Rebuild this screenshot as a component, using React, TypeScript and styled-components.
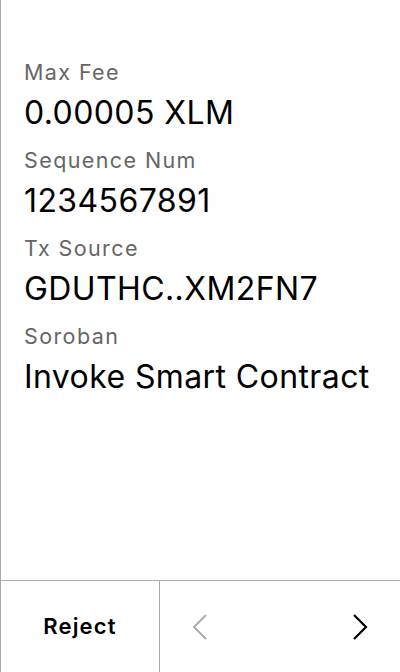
import React from "react";
import styled, { createGlobalStyle } from "styled-components";

const Global = createGlobalStyle`
  html, body { margin: 0; padding: 0; background: #fff; }
  body { font-family: Inter, "Noto Sans", sans-serif; }
  * { box-sizing: border-box; }
`;

const Screen = styled.div`
  width: 400px;
  height: 672px;
  display: flex;
  flex-direction: column;
  border-left: 1px solid #a8a8a8;
  background: #fff;
`;

const Content = styled.div`
  flex: 1;
  padding: 58px 0 0 23px;
  display: flex;
  flex-direction: column;
`;

const Label = styled.div`
  font-size: 21.5px;
  line-height: 28px;
  letter-spacing: 1.4px;
  color: #666;
  margin-bottom: 7px;
`;

const Value = styled.div`
  font-size: 32px;
  line-height: 40px;
  letter-spacing: 0.4px;
  color: #000;
  margin-bottom: 13px;
  white-space: nowrap;
`;

const Footer = styled.div`
  height: 92px;
  border-top: 1px solid #aaa;
  display: flex;
`;

const RejectButton = styled.div`
  width: 159px;
  border-right: 1px solid #aaa;
  display: flex;
  align-items: center;
  justify-content: center;
  font-size: 22px;
  font-weight: 600;
  letter-spacing: 1.2px;
  color: #000;
  padding-bottom: 2px;
`;

const Nav = styled.div`
  flex: 1;
  display: flex;
  align-items: center;
  justify-content: space-between;
  padding: 0 32px 0 32px;
`;

const Chevron = styled.svg<{ $muted?: boolean }>`
  width: 16px;
  height: 28px;
  color: ${(p) => (p.$muted ? "#a8a8a8" : "#000")};
`;

const rows = [
  ["Max Fee", "0.00005 XLM"],
  ["Sequence Num", "1234567891"],
  ["Tx Source", "GDUTHC..XM2FN7"],
  ["Soroban", "Invoke Smart Contract"],
];

export default function App() {
  return (
    <>
      <Global />
      <Screen>
        <Content>
          {rows.map(([l, v]) => (
            <React.Fragment key={l}>
              <Label>{l}</Label>
              <Value>{v}</Value>
            </React.Fragment>
          ))}
        </Content>
        <Footer>
          <RejectButton>Reject</RejectButton>
          <Nav>
            <Chevron $muted viewBox="0 0 16 28">
              <path d="M14 2 L2 14 L14 26" fill="none" stroke="currentColor" strokeWidth="1.8" />
            </Chevron>
            <Chevron viewBox="0 0 16 28">
              <path d="M2 2 L14 14 L2 26" fill="none" stroke="currentColor" strokeWidth="2.2" />
            </Chevron>
          </Nav>
        </Footer>
      </Screen>
    </>
  );
}
